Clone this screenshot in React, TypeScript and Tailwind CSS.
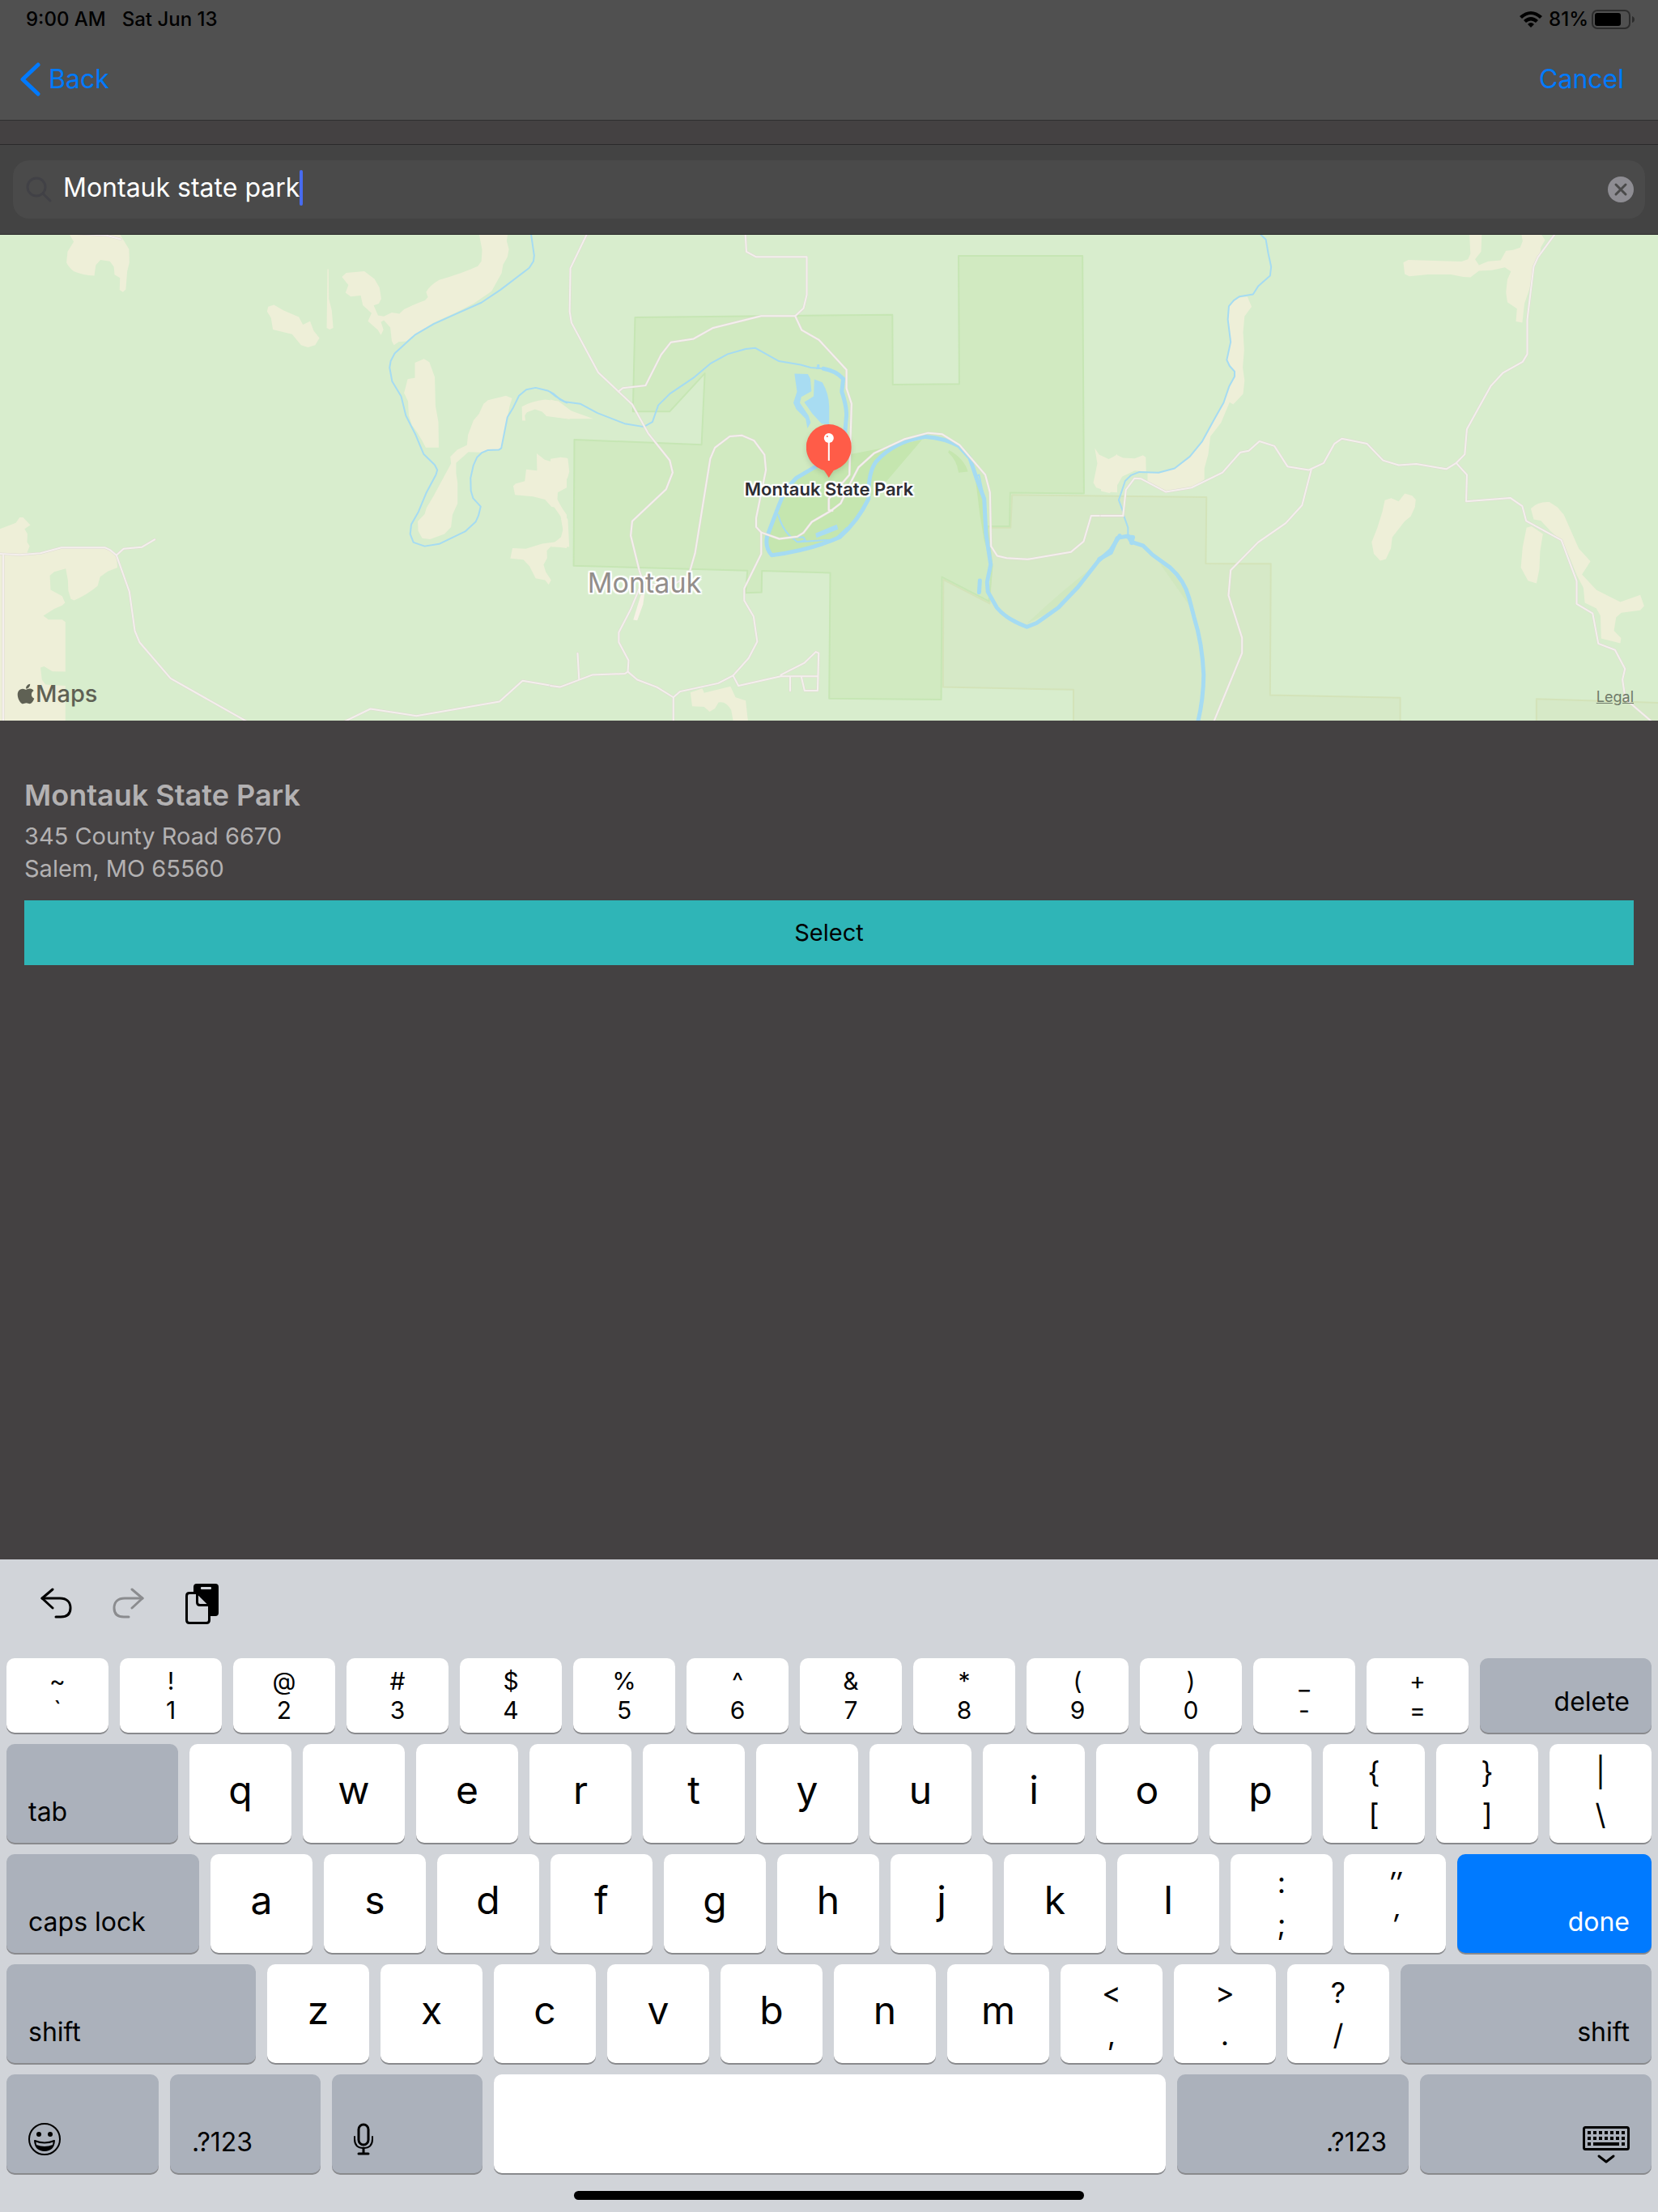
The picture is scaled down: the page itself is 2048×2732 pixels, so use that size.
import { useState, type ReactNode } from 'react';
import { clsx } from 'clsx';
import { FaApple } from 'react-icons/fa';

/* ---------- map data, one entry per tile, in tile units (1568 x 1568) ---------- */

type Tile = {
  transform: string;
  sand: string[];
  streams: string[];
  rivers?: string[];
  roads: string[];
};

const tiles: Tile[] = [
  {
    transform: 'translate(0 -10) scale(0.44643 0.39541)',
    sand: [
      'M190 20L204 47L187 78L184 112Q190 128 205 140Q230 152 261 153L265 120L278 104L304 108L315 125L317 150L332 160L331 197L340 204L348 196L352 140L358 112L357 70L330 20Z',
      'M1325 20L1334 72L1332 108L1322 123Q1280 145 1215 166Q1190 182 1179 204L1184 220L1176 230Q1150 240 1118 258L1105 272L1084 268L1062 280L1046 277L1034 246L1048 240L1055 225L1050 190L1036 163L1008 139L958 144L946 157L964 182L956 206L970 218L998 215L1004 245L1028 270L1018 295L1045 322L1054 338L1061 322L1054 298L1062 292L1080 315L1084 357L1090 370L1103 360L1124 358L1150 335L1200 300L1262 268L1310 240L1360 202L1388 145L1392 118L1404 95L1408 70L1402 45L1405 20Z',
      'M742 250L758 244L785 262L827 282L838 306L858 295L868 325L884 348L872 370L852 377L833 370L808 336L755 321L750 285L739 265Z',
      'M906 133L909 133L910 225L918 262L922 316L912 321L904 316Z',
      'M1148 425L1173 413L1188 423L1203 470L1205 560L1213 610L1214 690L1178 690L1168 668L1153 640L1140 620L1131 590L1129 545L1118 520L1128 476L1148 472Z',
      'M1350 542L1400 528L1417 536L1410 560L1404 595L1388 695L1330 705L1296 704L1262 738L1262 770L1266 800L1266 865L1252 900L1248 938L1230 960L1190 976L1168 973L1157 950L1156 920L1175 898L1180 878L1200 840L1248 740L1246 718L1265 697L1292 682L1295 650L1310 605L1325 585L1338 553Z',
      'M1444 562Q1470 545 1508 540L1545 545L1580 575L1642 600L1570 600L1512 592L1500 578L1480 570L1458 580L1452 590L1454 606L1445 606Z',
      'M1485 708L1507 728L1537 738L1550 722L1568 722L1568 815L1543 830L1542 852L1556 880L1568 900L1568 1004L1525 998L1513 1012L1514 1035L1504 1056L1510 1078L1525 1104L1518 1118L1508 1104L1482 1098L1465 1060L1448 1040L1412 1036L1418 1004L1455 1006L1500 990L1535 985L1552 970L1558 945L1552 900L1538 876L1526 875L1508 852L1475 843L1425 838L1420 810L1426 803L1452 795L1456 758L1486 762Z',
      'M0 944L44 925L54 908L64 908L84 932L68 944L76 960L75 985L82 998L75 1018L115 1022L170 1002L290 1002L322 1026L325 1065L298 1077L277 1094L270 1122Q240 1150 205 1167L196 1163L189 1137L188 1105L182 1068L150 1078L138 1090L140 1134L172 1154L180 1175L172 1183L150 1194L120 1215L134 1227L172 1227L181 1235L181 1390L145 1389L122 1373L112 1377L116 1415L126 1430L181 1434L181 1560L0 1560Z',
    ],
    streams: [
      'M1469 20L1478 90L1476 108L1464 129L1385 197L1332 237L1262 272L1200 304L1148 338L1092 396L1081 420L1078 440L1085 483L1110 530L1123 590L1150 650L1172 710L1203 744L1210 760L1206 775L1180 830L1158 890L1138 930L1135 960L1144 986L1175 998L1215 991L1287 952L1316 922L1324 902L1330 874L1309 848L1303 825L1302 785L1310 745L1320 720L1333 706L1350 698L1380 697L1387 692L1404 595L1420 565L1436 528L1456 509L1482 503L1515 512L1532 522L1550 540L1568 550',
    ],
    roads: [
      'M190 20L295 27L334 39',
      'M0 1022L55 1025L112 1020L170 1002L290 1002L305 1010L322 1026L342 1006L392 1001L428 977',
      'M322 1026L358 1140L373 1262L386 1298L472 1411L690 1550',
      'M9 1026L9 1560',
      'M945 1550L1025 1506L1152 1528L1382 1483L1446 1418L1548 1438L1580 1426',
    ],
  },
  {
    transform: 'translate(680 -10) scale(0.44643 0.39541)',
    sand: [
      'M0 540L22 547L54 580L53 601L0 592Z',
      'M0 725L28 720L48 724L52 765L47 785L20 822L18 850L30 880L48 915L52 1000L0 1000L30 980L35 950L28 905L0 860Z',
      'M387 1455L420 1442L425 1456L498 1436L512 1470L540 1480L548 1560L508 1560L500 1510Q485 1480 465 1486L455 1505L440 1515L425 1500L392 1498Z',
      'M1506 692L1518 712L1548 728L1568 710L1568 830L1545 828L1510 815L1502 800L1513 740Z',
    ],
    streams: [
      'M0 517L12 528L40 547L82 553L130 582L205 615L258 625L282 610L298 558L330 522L398 470L442 428L490 398L540 382L567 379L632 420L692 431L720 440L755 443',
      'M630 900Q640 940 660 963L683 985L745 980L785 978L820 940M683 985L705 980L700 970L665 970',
      'M1178 780L1186 775L1196 830L1190 800',
    ],
    rivers: [
      'M755 443Q790 450 810 475L806 515Q822 570 818 600L812 680',
      'M740 745L680 785Q648 820 632 870L600 965Q592 1000 612 1026Q720 1010 800 970Q850 920 880 850Q878 770 900 735Q950 670 1038 656Q1090 660 1130 685L1160 722L1180 790L1200 850L1205 960L1218 1055L1208 1110L1210 1140L1235 1190Q1260 1225 1318 1250L1345 1238L1405 1190L1460 1125L1515 1045L1550 1010L1575 965',
      'M1188 1105L1186 1142',
    ],
    roads: [
      'M102 20L55 130L53 265L58 300L132 455L188 515L226 555L270 645L330 730L338 768L320 820L226 920L222 965L246 1075L255 1105L222 1195L189 1267L189 1298L216 1355L214 1390L206 1396L115 1400L26 1438L0 1434',
      'M539 20L542 78L568 94L709 94L709 213L700 255L677 279L583 279L450 316L396 350L333 361L306 400L263 496L200 504L188 515',
      'M677 279L695 323L743 354L819 447L819 505L833 553L827 775L770 850L770 885L780 887',
      'M75 1333L79 1414',
      'M214 1390L240 1415L294 1438L340 1470L358 1452L464 1426L505 1402L548 1348L572 1296L562 1218L536 1168L536 1130L583 1022L583 955L569 938L569 910L596 760L592 712L563 668L530 652L496 655L455 690L442 725L400 1020L382 1090L340 1118L280 1118L255 1095',
      'M340 1470L340 1560',
      'M505 1402L520 1434L637 1404L738 1404M637 1400L703 1362L734 1328L742 1332L739 1449L703 1449L694 1406M663 1406L663 1450',
      'M583 955L633 975L683 968L700 956L723 922L775 888L803 864L830 800L852 752L895 708L978 664L1045 644L1083 648L1132 682L1203 775L1216 830L1219 998L1236 1028L1262 1035L1320 1039L1440 1016L1475 983L1496 903L1585 903',
    ],
  },
  {
    transform: 'translate(1360 -10) scale(0.43878 0.39541)',
    sand: [
      'M0 715L18 728L45 713L62 722L95 724L118 714L126 720L127 765L95 762L60 780L40 818L24 832L0 826Z',
      'M385 222L412 218L424 250L404 280L400 330L403 385L399 440L404 480L400 522L372 555L362 548L338 612L308 655L302 710L291 755L291 790L255 815L182 828L131 798L131 768L162 768L207 755L250 718L284 672L318 603L345 550L361 498L376 468L374 450L354 416L365 360L357 290L360 248Z',
      'M851 112L865 104L1015 109L1033 102L1040 85L1037 20L1072 20L1070 78L1053 102L1064 120L1090 108L1125 105L1140 75L1160 73L1180 65L1187 45L1183 20L1237 20L1250 42L1238 65L1236 88L1220 125L1206 195L1192 240L1186 300L1168 296L1171 256L1144 236L1140 205L1144 165L1154 140L1137 127L1100 136L1064 138L1040 158L1020 157L985 149L920 149L868 155L855 148Z',
      'M799 854L817 848L838 858L855 833L876 840L886 852L884 875L872 905L855 920L820 970L816 1005L802 1038L786 1043L768 1022L762 985L778 940L792 890Z',
      'M1198 940L1212 936L1244 960L1236 1015L1234 1070L1226 1114L1202 1106L1182 1065L1187 1000Z',
      'M1210 880Q1230 858 1262 860L1285 876L1303 900L1345 1005L1378 1045L1354 1086L1395 1135L1462 1172L1518 1150L1529 1185L1518 1198L1465 1206L1450 1220L1444 1262L1464 1285L1462 1301L1408 1286L1406 1215L1394 1192L1362 1175L1358 1128L1340 1090L1318 1030L1300 985L1265 950L1238 918L1218 914Z',
    ],
    streams: [
      'M445 20L464 40L471 84L479 125L476 153L443 185L428 211L390 218L374 230L360 248L357 290L365 360L354 416L362 435L376 452L376 468L361 498L345 550L318 603L284 672L250 718L207 755L162 768L108 766L85 776L68 794L50 854L62 890L65 905L76 940L76 965',
    ],
    rivers: [
      'M-5 1038L28 1018L46 972L76 966L86 985L118 996L145 1025L195 1065Q235 1105 248 1160L262 1220Q285 1300 289 1400Q288 1480 272 1550',
      'M72 968L90 970L86 988',
    ],
    roads: [
      'M0 903L62 903L70 822L94 786L112 787L182 828L255 815L342 768L392 705L416 700L446 670L488 685L525 749L585 760L627 738L657 678L678 662L749 678L794 730L838 745L888 741L972 757L1000 738L1024 711L1030 632L1097 498L1131 457L1187 422L1200 398L1200 290L1218 125L1230 95L1280 20',
      'M592 758L566 870L520 926L442 986L365 1073L359 1152L397 1284L397 1332L316 1550',
      'M1000 738L1030 775L1028 858L1152 847L1186 873L1197 919L1296 979L1339 1107L1339 1178L1384 1208L1400 1302L1447 1322L1475 1381L1468 1415L1476 1475L1560 1555',
    ],
  },
];

function MapDrawing() {
  const parks = tiles[1].transform;
  return (
    <svg
      className="block h-full w-full"
      viewBox="0 0 2048 600"
      preserveAspectRatio="xMidYMid slice"
      fill="none"
      strokeLinejoin="round"
      strokeLinecap="round"
      aria-hidden="true"
    >
      {/* parks and conservation land */}
      <g transform={parks} strokeWidth="2">
        <path
          d="M1277 838L1815 845L1813 1052L1993 1053L1991 1463L2351 1471L2351 1570L1447 1570L1447 1446L1086 1438L1087 1102L1215 1177L1220 1060L1209 940L1273 940Z"
          fill="#d6e9c7" stroke="#d3e3b9" vectorEffect="non-scaling-stroke"
        />
        <path
          d="M2728 1570L2728 1475L3100 1488L3100 1570Z"
          fill="#d6e9c7" stroke="#d3e3b9" vectorEffect="non-scaling-stroke"
        />
        <path
          d="M234 283L946 275L947 493L1131 491L1129 91L1472 91L1476 833L1272 831L1270 936L1209 936L1222 1060L1213 1170L1083 1094L1081 1477L771 1474L774 1081L585 1075L584 1142L540 1144L545 1074L64 1059L66 665L418 681L427 458L330 577L228 577Z"
          fill="#d1eac1" stroke="#c6e6b4" vectorEffect="non-scaling-stroke"
        />
        <path
          d="M833 710L935 688L1028 665L930 795L880 850Q850 920 800 970Q720 1010 612 1026L598 990L632 870Q648 820 680 785L740 745Z"
          fill="#c5e6af"
        />
        <path d="M1103 698Q1145 725 1155 765L1129 768Q1125 730 1100 705Z" fill="#c5e6af" />
        <path d="M1176 790L1200 850L1216 1040L1200 980L1188 900Z" fill="#c5e6af" />
        <path d="M1318 1240Q1400 1150 1515 1050L1405 1190Z" fill="#d0e7bf" />
        <path d="M1685 1050Q1750 1095 1772 1190Z" fill="#d0e7bf" />
      </g>

      {tiles.map((tile) => (
        <g key={tile.transform} transform={tile.transform} fill="#eeefd8">
          {tile.sand.map((d) => <path key={d} d={d} />)}
        </g>
      ))}

      {/* ponds */}
      <g transform={parks} fill="#a8dcf2">
        <path d="M675 459L712 460L719 475L722 514L694 532L690 550L714 590L720 612L711 630L706 600L680 570L672 550L682 515Z" />
        <path d="M730 477L752 486Q770 520 771 560L771 618L750 615L725 585L702 548L728 530Z" />
        <path d="M733 958L792 930L796 945L736 972Z" />
        <path d="M735 445L738 430L744 430L745 445Z" />
        <path d="M229 1228L250 1150L260 1148L256 1180L240 1230Z" fill="#f7f1e6" />
      </g>

      {tiles.map((tile) => (
        <g key={tile.transform} transform={tile.transform} stroke="#a5dbf2">
          {tile.streams.map((d) => (
            <path key={d} d={d} strokeWidth="2" vectorEffect="non-scaling-stroke" />
          ))}
          {tile.rivers?.map((d) => (
            <path key={d} d={d} strokeWidth="5" vectorEffect="non-scaling-stroke" />
          ))}
        </g>
      ))}

      {tiles.map((tile) => (
        <g key={tile.transform} transform={tile.transform}>
          {tile.roads.map((d) => (
            <path key={d} d={d} stroke="#dfdad2" strokeWidth="3" vectorEffect="non-scaling-stroke" />
          ))}
          {tile.roads.map((d) => (
            <path key={d} d={d} stroke="#f4efed" strokeWidth="2" vectorEffect="non-scaling-stroke" />
          ))}
        </g>
      ))}
    </svg>
  );
}

/* ---------- icons ---------- */

function WifiIcon() {
  return (
    <svg className="h-5 w-7" viewBox="0 0 28 20" aria-hidden="true">
      <path d="M0 6Q14-6 28 6L25 9Q14-1 3 9Z" />
      <path d="M5 11Q14 3 23 11L20 14Q14 9 8 14Z" />
      <path d="M10 16Q14 12 18 16L14 20Z" />
    </svg>
  );
}

function BatteryIcon() {
  return (
    <svg className="h-6 w-[54px]" viewBox="0 0 54 24" aria-hidden="true">
      <rect x="1" y="1" width="46" height="22" rx="6" fill="none" stroke="#2c2c2c" strokeWidth="2" />
      <rect x="4" y="4" width="32" height="16" rx="3" />
      <path d="M50 8Q53 9 53 12Q53 15 50 16Z" fill="#2c2c2c" />
    </svg>
  );
}

function ArrowIcon({ flip = false }: { flip?: boolean }) {
  return (
    <svg
      className={clsx('h-10 w-10', flip && '-scale-x-100')}
      viewBox="0 0 40 40" fill="none" stroke="currentColor" strokeWidth="3"
      strokeLinecap="round" strokeLinejoin="round" aria-hidden="true"
    >
      <path d="M16 2L3 13L16 25" />
      <path d="M3 13H25C33 13 38 17 38 25S33 36 26 36H20" />
    </svg>
  );
}

function PasteIcon() {
  return (
    <svg className="h-[50px] w-[42px]" viewBox="0 0 42 50" aria-hidden="true">
      <path d="M14 0H37Q41 0 41 4V36Q41 40 37 40H31V27L17 12H10V4Q10 0 14 0Z" />
      <rect x="19" y="4" width="13" height="3" rx="1" fill="#d1d4d9" />
      <path d="M1.500 15Q1.500 11.500 5 11.500H15L29.500 26V45Q29.500 48.500 26 48.500H5Q1.500 48.500 1.500 45Z" fill="#d1d4d9" stroke="#000" strokeWidth="3" />
      <path d="M14.500 12V23Q14.500 26.500 18 26.500H29" fill="none" stroke="#000" strokeWidth="3" />
    </svg>
  );
}

function EmojiIcon() {
  return (
    <svg className="h-10 w-10" viewBox="0 0 40 40" aria-hidden="true">
      <circle cx="20" cy="20" r="19" fill="none" stroke="#000" strokeWidth="2" />
      <circle cx="13" cy="14" r="3" />
      <circle cx="27" cy="14" r="3" />
      <path d="M8 22Q20 27 32 22Q31 34 20 34Q9 34 8 22Z" fill="none" stroke="#000" strokeWidth="2" strokeLinejoin="round" />
      <path d="M10 27Q20 31 30 27Q28 34 20 34Q12 34 10 27Z" />
    </svg>
  );
}

function MicIcon() {
  return (
    <svg className="h-10 w-6" viewBox="0 0 24 40" fill="none" stroke="#000" strokeLinecap="round" aria-hidden="true">
      <rect x="6" y="2" width="12" height="25" rx="6" strokeWidth="3" />
      <path d="M1 17V20Q1 31 12 31T23 20V17" strokeWidth="2" />
      <path d="M12 31V37M6 38H18" strokeWidth="3" />
    </svg>
  );
}

function HideKeyboardIcon() {
  const cols = [0, 1, 2, 3, 4, 5, 6];
  return (
    <svg className="h-[46px] w-[58px]" viewBox="0 0 58 46" aria-hidden="true">
      <rect x="1.500" y="1.500" width="55" height="27" rx="2" fill="none" stroke="#000" strokeWidth="3" />
      {cols.map((c) => <rect key={c} x={6 + c * 7} y="6" width="4" height="4" />)}
      {cols.map((c) => <rect key={c} x={6 + c * 7} y="13" width="4" height="4" />)}
      <rect x="6" y="20" width="4" height="4" />
      <rect x="13" y="20" width="32" height="4" />
      <rect x="48" y="20" width="4" height="4" />
      <path d="M20 37L29 44L38 37" fill="none" stroke="#000" strokeWidth="3" strokeLinecap="round" strokeLinejoin="round" />
    </svg>
  );
}

/* ---------- keyboard ---------- */

const keyBase = 'rounded-[10px] shadow-[0_2px_0_#898a8d]';

function NumberKey({ top, bottom }: { top: string; bottom: string }) {
  return (
    <button className={clsx(keyBase, 'flex h-[92px] min-w-0 flex-126 flex-col items-center justify-center bg-white text-3xl leading-9')}>
      <span>{top}</span>
      <span>{bottom}</span>
    </button>
  );
}

function LetterKey({ label }: { label: string }) {
  return (
    <button className={clsx(keyBase, 'h-[122px] min-w-0 flex-126 bg-white pb-2 text-5xl')}>
      {label}
    </button>
  );
}

function SymbolKey({ top, bottom, italic }: { top: string; bottom: string; italic?: boolean }) {
  return (
    <button
      className={clsx(
        keyBase,
        'flex h-[122px] min-w-0 flex-126 flex-col items-center justify-center bg-white text-4xl leading-[52px]',
        italic && 'italic',
      )}
    >
      <span>{top}</span>
      <span>{bottom}</span>
    </button>
  );
}

type ActionKeyProps = { className: string; right?: boolean; label?: string; children: ReactNode };

function ActionKey({ className, right, label, children }: ActionKeyProps) {
  return (
    <button aria-label={label} className={clsx(keyBase, 'flex min-w-0 items-end text-[32px] leading-10', className)}>
      <span className={clsx('flex w-full px-[27px]', right && 'justify-end')}>{children}</span>
    </button>
  );
}

const numberKeys = ['~`', '!1', '@2', '#3', '$4', '%5', '^6', '&7', '*8', '(9', ')0', '_-', '+='];

function Keyboard() {
  return (
    <section className="bg-[#d1d4d9] text-black" aria-label="Keyboard">
      <div className="flex h-[122px] items-center pb-3 pl-[49px]">
        <button aria-label="Undo"><ArrowIcon /></button>
        <button aria-label="Redo" disabled className="ml-[50px] text-[#8b8c8f]"><ArrowIcon flip /></button>
        <button aria-label="Paste" className="ml-[50px]"><PasteIcon /></button>
      </div>

      <div className="flex flex-col gap-[14px] px-2">
        <div className="flex gap-[14px]">
          {numberKeys.map((k) => <NumberKey key={k} top={k[0]} bottom={k[1]} />)}
          <ActionKey className="h-[92px] flex-212 bg-[#abb1bb] pb-[18px]" right>delete</ActionKey>
        </div>

        <div className="flex gap-[14px]">
          <ActionKey className="h-[122px] flex-212 bg-[#abb1bb] pb-[18px]">tab</ActionKey>
          {'qwertyuiop'.split('').map((k) => <LetterKey key={k} label={k} />)}
          <SymbolKey top="{" bottom="[" />
          <SymbolKey top="}" bottom="]" />
          <SymbolKey top="|" bottom="\" />
        </div>

        <div className="flex gap-[14px]">
          <ActionKey className="h-[122px] flex-238 bg-[#abb1bb] pb-[18px]">caps lock</ActionKey>
          {'asdfghjkl'.split('').map((k) => <LetterKey key={k} label={k} />)}
          <SymbolKey top=":" bottom=";" />
          <SymbolKey top="″" bottom="′" italic />
          <ActionKey className="h-[122px] flex-240 bg-[#007aff] pb-[18px] text-white" right>done</ActionKey>
        </div>

        <div className="flex gap-[14px]">
          <ActionKey className="h-[122px] flex-308 bg-[#abb1bb] pb-[18px]">shift</ActionKey>
          {'zxcvbnm'.split('').map((k) => <LetterKey key={k} label={k} />)}
          <SymbolKey top="<" bottom="," />
          <SymbolKey top=">" bottom="." />
          <SymbolKey top="?" bottom="/" />
          <ActionKey className="h-[122px] flex-310 bg-[#abb1bb] pb-[18px]" right>shift</ActionKey>
        </div>

        <div className="flex gap-[14px]">
          <ActionKey className="h-[122px] flex-188 bg-[#abb1bb] pb-[22px]" label="Emoji"><EmojiIcon /></ActionKey>
          <ActionKey className="h-[122px] flex-186 bg-[#abb1bb] pb-[18px]">.?123</ActionKey>
          <ActionKey className="h-[122px] flex-186 bg-[#abb1bb] pb-[22px]" label="Dictate"><MicIcon /></ActionKey>
          <button aria-label="Space" className={clsx(keyBase, 'h-[122px] flex-830 bg-white')} />
          <ActionKey className="h-[122px] flex-286 bg-[#abb1bb] pb-[18px]" right>.?123</ActionKey>
          <ActionKey className="h-[122px] flex-286 bg-[#abb1bb] pb-3" right label="Hide keyboard"><HideKeyboardIcon /></ActionKey>
        </div>
      </div>

      {/* home indicator */}
      <div className="flex h-12 items-center justify-center pt-[6px]">
        <div className="h-[11px] w-[630px] rounded-full bg-black" />
      </div>
    </section>
  );
}

/* ---------- page ---------- */

const halo = '[text-shadow:0_0_3px_#fff,2px_0_1px_#fff,-2px_0_1px_#fff,0_2px_1px_#fff,0_-2px_1px_#fff,2px_2px_1px_#fff,-2px_-2px_1px_#fff,2px_-2px_1px_#fff,-2px_2px_1px_#fff]';

export default function App() {
  const [query, setQuery] = useState('Montauk state park');

  return (
    <div className="flex min-h-screen flex-col bg-[#444142] font-[Inter,sans-serif]">
      <header className="border-b border-[#2f2f2f] bg-[#505050]">
        <div className="flex h-12 items-center justify-between pr-7 pl-8 text-2xl font-medium text-black">
          <div className="flex gap-5">
            <span>9:00 AM</span>
            <span>Sat Jun 13</span>
          </div>
          <div className="flex items-center">
            <WifiIcon />
            <span className="mr-1 ml-2">81%</span>
            <BatteryIcon />
          </div>
        </div>
        <nav className="flex h-[100px] items-center justify-between pr-[42px] pl-6 text-[32px] text-[#007aff]">
          <button className="flex items-center gap-[10px]">
            <svg className="h-[42px] w-[26px]" viewBox="0 0 26 42" fill="none" stroke="currentColor" strokeWidth="5" strokeLinecap="round" strokeLinejoin="round" aria-hidden="true">
              <path d="M23 3L4 21L23 39" />
            </svg>
            Back
          </button>
          <button>Cancel</button>
        </nav>
      </header>

      <div className="mt-[29px] border-y border-[#2a2a2a] bg-[#434343] px-4 py-[19px]">
        <div className="flex h-[72px] items-center rounded-[20px] bg-[#4a4a4a] pr-[14px] pl-4">
          <svg className="h-8 w-8" viewBox="0 0 32 32" fill="none" stroke="#414146" strokeWidth="3" strokeLinecap="round" aria-hidden="true">
            <circle cx="13" cy="13" r="11" />
            <path d="M21 21L30 30" />
          </svg>
          <div className="ml-[14px] flex items-center pb-1">
            <input
              type="text"
              aria-label="Search"
              value={query}
              onChange={(e) => setQuery(e.target.value)}
              className="field-sizing-content bg-transparent text-[32px] leading-[44px] text-white outline-none"
            />
            <span className="h-11 w-1 rounded-full bg-[#476bf0]" />
          </div>
          <button aria-label="Clear search" onClick={() => setQuery('')} className="ml-auto">
            <svg className="h-8 w-8" viewBox="0 0 32 32" aria-hidden="true">
              <circle cx="16" cy="16" r="16" fill="#8e8d93" />
              <path d="M10 10L22 22M22 10L10 22" stroke="#4a4a4a" strokeWidth="3" strokeLinecap="round" />
            </svg>
          </button>
        </div>
      </div>

      <div className="relative h-[600px] overflow-hidden bg-[#d8edcd]">
        <MapDrawing />
        <div className="absolute top-[234px] left-1/2 flex -translate-x-1/2 flex-col items-center">
          <svg className="h-[66px] w-14 drop-shadow-md" viewBox="0 0 56 66" aria-hidden="true">
            <path d="M28 0A28 28 0 0 1 56 28C56 43 46 53 34 57Q31 61 28 66Q25 61 22 57C10 53 0 43 0 28A28 28 0 0 1 28 0Z" fill="#ff5c48" />
            <circle cx="28" cy="17" r="6" fill="#fff" />
            <circle cx="26" cy="15" r="1" fill="#ff5c48" />
            <path d="M28 20V45" stroke="#fff" strokeWidth="2" />
          </svg>
          <span className={clsx('text-[22px] leading-7 font-semibold text-[#2d2d33]', halo)}>Montauk State Park</span>
        </div>
        <span className={clsx('absolute top-[410px] left-[calc(50%-228px)] -translate-x-1/2 text-[34px] leading-10 text-[#938e8b]', halo)}>Montauk</span>
        <div className="absolute bottom-[15px] left-5 flex items-center text-[29px] leading-9 text-[#5f6154]">
          <FaApple className="h-7 w-6" />
          <span className="font-medium">Maps</span>
        </div>
        <a href="#legal" className="absolute right-[30px] bottom-[15px] text-lg text-[#6f7a69] underline">Legal</a>
      </div>

      <main className="flex-1 px-[30px] pt-[69px] text-[#b3b1b2]">
        <h1 className="text-4xl leading-[46px] font-semibold">Montauk State Park</h1>
        <p className="mt-2 text-[29px] leading-10">
          345 County Road 6670
          <br />
          Salem, MO 65560
        </p>
        <button className="mt-[19px] h-20 w-full bg-[#2fb5b7] text-[29px] text-black">Select</button>
      </main>

      <Keyboard />
    </div>
  );
}
